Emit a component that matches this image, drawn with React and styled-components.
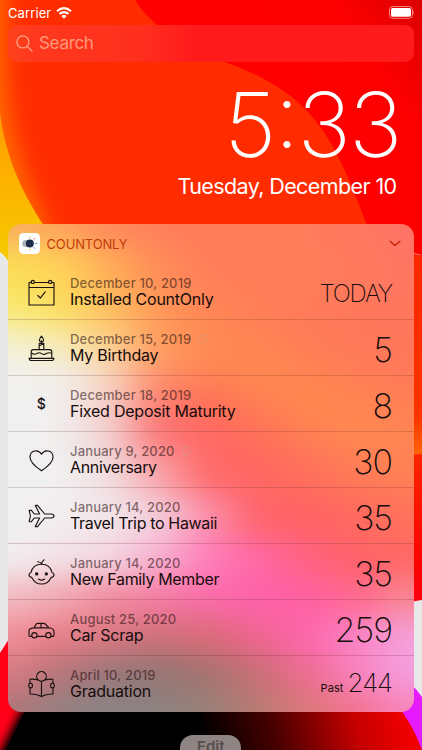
import React from 'react';
import styled, { createGlobalStyle } from 'styled-components';

const GlobalStyle = createGlobalStyle`
  html, body {
    margin: 0;
    padding: 0;
    height: 100%;
    overflow: hidden;
    background: #000;
  }

  * {
    box-sizing: border-box;
  }
`;

const Screen = styled.div`
  position: relative;
  width: 422px;
  height: 750px;
  overflow: hidden;
  font-family: Inter, 'Liberation Sans', sans-serif;
  color: #fff;
`;

const WallpaperSvg = styled.svg`
  position: absolute;
  inset: 0;
  display: block;
`;

const Content = styled.div`
  position: relative;
  display: flex;
  flex-direction: column;
  height: 750px;
  padding: 0 8.5px 0 8px;
`;

const StatusBar = styled.div`
  display: flex;
  align-items: center;
  height: 25px;
  flex-shrink: 0;
  font-size: 13px;
  letter-spacing: 0.1px;
`;

const Carrier = styled.span`
  flex: 1;
  display: flex;
  align-items: center;
  gap: 5px;
`;

const SearchBar = styled.div`
  display: flex;
  align-items: center;
  gap: 6px;
  height: 36.5px;
  flex-shrink: 0;
  padding-left: 8px;
  border-radius: 9px;
  background: linear-gradient(90deg, #fd431b 0, #ff381d 6%, #ff301e 32%, #ff1a1c 46%, #ff1a1c 100%);
  color: #ff9a7c;
  font-size: 17px;
  letter-spacing: -0.3px;
`;

const Clock = styled.div`
  display: flex;
  flex-direction: column;
  align-items: flex-end;
  height: 162px;
  flex-shrink: 0;
  padding-top: 18px;
`;

const Time = styled.div`
  font-size: 90px;
  font-weight: 220;
  line-height: 90px;
  letter-spacing: -1.9px;
  margin-right: 13px;
`;

const Colon = styled.span`
  vertical-align: 9px;
  line-height: 0;
`;

const Today = styled.div`
  margin: 2px 17px 0 0;
  font-size: 21.5px;
  line-height: 28px;
  letter-spacing: -0.6px;
`;

const Card = styled.section`
  position: relative;
  height: 488px;
  flex-shrink: 0;
  border-radius: 13px;
  overflow: hidden;
  color: #170d0c;
`;

const CardTint = styled.svg`
  position: absolute;
  inset: 0;
`;

const CardBody = styled.div`
  position: relative;
`;

const CardHeader = styled.header`
  display: flex;
  align-items: center;
  height: 40px;
  padding: 0 13px 0 10.5px;
`;

const CardName = styled.span`
  flex: 1;
  margin-left: 7px;
  color: #c23c0a;
  font-size: 13px;
  letter-spacing: -0.15px;
`;

const Row = styled.div`
  display: flex;
  align-items: center;
  height: 56px;
  padding: 0 21.5px 0 20px;
  border-bottom: 1px solid ${(props) => (props.$last ? 'transparent' : 'rgba(90, 30, 30, 0.2)')};
`;

const RowIcon = styled.svg`
  width: 27px;
  height: 27px;
  margin-top: 2px;
  flex-shrink: 0;
  fill: none;
  stroke: #1c1412;
  stroke-width: 1.15;
  stroke-linecap: round;
  stroke-linejoin: round;
`;

const RowText = styled.div`
  flex: 1;
  margin-left: 15px;
  padding-top: 1px;
`;

const DateLine = styled.div`
  display: flex;
  align-items: center;
  gap: 6px;
  height: 16px;
  font-size: 13px;
  font-weight: 500;
  line-height: 16px;
  letter-spacing: 0.18px;
  color: rgba(40, 15, 15, 0.58);
`;

const Title = styled.div`
  font-size: 16px;
  line-height: 17px;
  letter-spacing: ${(props) => props.$spacing}px;
  white-space: nowrap;
`;

const Count = styled.div`
  display: flex;
  align-items: baseline;
  gap: 4px;
  padding-top: 5px;
  font-weight: 160;
  font-size: ${(props) => props.$size}px;
  letter-spacing: ${(props) => props.$spacing}px;
  line-height: 40px;
`;

const Past = styled.span`
  font-size: 11px;
  font-weight: 400;
  letter-spacing: 0.1px;
`;

const Footer = styled.div`
  display: flex;
  justify-content: center;
  padding-top: 23.5px;
`;

const EditButton = styled.button`
  width: 61px;
  height: 30px;
  flex-shrink: 0;
  border: none;
  border-radius: 13px;
  padding: 0;
  background: #8d8483;
  color: #574d4c;
  font-family: inherit;
  font-size: 15px;
  font-weight: 600;
  line-height: 23px;
  display: flex;
  justify-content: center;
`;

const Wallpaper = () => (
  <WallpaperSvg width="422" height="750" viewBox="0 0 422 750">
    <defs>
      <linearGradient id="red" x1="0.5" y1="0.3" x2="1" y2="0">
        <stop offset="0" stopColor="#ff0000" />
        <stop offset="0.55" stopColor="#fc0000" />
        <stop offset="1" stopColor="#dc0000" />
      </linearGradient>
      <linearGradient id="yellow" x1="0" y1="0" x2="0" y2="1">
        <stop offset="0" stopColor="#ff9c00" />
        <stop offset="0.5" stopColor="#fcb400" />
        <stop offset="1" stopColor="#f5cc00" />
      </linearGradient>
      <linearGradient id="edge" x1="0" y1="0" x2="0" y2="1">
        <stop offset="0" stopColor="#ff2600" />
        <stop offset="0.8" stopColor="#ff3400" />
        <stop offset="1" stopColor="#ff6a00" />
      </linearGradient>
      <linearGradient id="lowerEdge" x1="0" y1="0" x2="0" y2="1">
        <stop offset="0" stopColor="#ff2400" />
        <stop offset="0.7" stopColor="#ff0400" />
        <stop offset="1" stopColor="#ff0010" />
      </linearGradient>
      <linearGradient id="floor" gradientUnits="userSpaceOnUse" x1="205" y1="750" x2="400" y2="700">
        <stop offset="0" stopColor="#000" />
        <stop offset="0.35" stopColor="#460000" />
        <stop offset="0.75" stopColor="#c40000" />
        <stop offset="1" stopColor="#f00000" />
      </linearGradient>
      <filter id="soft" x="-50%" y="-50%" width="200%" height="200%" colorInterpolationFilters="sRGB">
        <feGaussianBlur stdDeviation="4" />
      </filter>
      <filter id="glow" filterUnits="userSpaceOnUse" x="-60" y="-60" width="220" height="400" colorInterpolationFilters="sRGB">
        <feGaussianBlur stdDeviation="13" />
      </filter>
    </defs>
    <rect width="422" height="750" fill="#e8e8e8" />
    <rect width="422" height="240" fill="#ff2c00" />
    <path d="M-9 -40V60Q-9 150 38 240" fill="none" stroke="#ff8c00" strokeWidth="20" filter="url(#glow)" />
    <path d="M0 113C5 152 18 186 44 226V264H10Q5 255 0 252Z" fill="url(#yellow)" />
    <path d="M135 0H422V255Q392 250 366 223C350 180 334 140 308 112C284 86 250 71 222 61L157 25Q142 12 135 0Z" fill="url(#red)" />
    <path d="M400 249Q412 254 422 255V455L400 458Z" fill="url(#edge)" />
    <path d="M400 456L422 454V600Q416 600 400 606Z" fill="url(#lowerEdge)" />
    <path d="M0 653Q4 647 12 634L60 700V750H0Z" fill="#ff0018" />
    <path d="M392 670Q412 682 422 697V750H392Z" fill="#e61aff" />
    <path d="M30 700H393Q412 722 422 750H6Z" fill="url(#floor)" />
    <path d="M-12 775L22 708H90V770Z" fill="#000" filter="url(#soft)" />
  </WallpaperSvg>
);

// colour samples of the blurred wallpaper behind the card: [y, ...columns]
const tintRows = [
  [0, '#f9b25c', '#ffa45c', '#ff8a5c', '#ff7e5a', '#ff7c59', '#ff7c59', '#ff7c5b', '#ff785f', '#ff7268'],
  [45, '#fbdd55', '#ffd458', '#ffaf58', '#ff8c59', '#ff7e59', '#ff7d59', '#ff7c5a', '#ff7a5d', '#ff7663'],
  [85, '#f9e970', '#fce060', '#ffc05e', '#ff9858', '#ff8455', '#ff7e57', '#ff7b59', '#ff785b', '#ff775d'],
  [118, '#f4f0d0', '#f7ecb0', '#fcd088', '#ff9f60', '#ff8b52', '#ff8453', '#ff7c57', '#ff785a', '#ff775b'],
  [148, '#f1f0ee', '#f2efe8', '#f6d8bc', '#ff9468', '#ff8454', '#ff8851', '#ff8352', '#ff7d56', '#ff7959'],
  [178, '#f0f0f0', '#f1efef', '#f5cfc9', '#fc7c72', '#ff7058', '#ff8053', '#ff8850', '#ff8551', '#ff7e55'],
  [208, '#f0f0f0', '#f1efef', '#f3d0d1', '#fb7778', '#ff6662', '#ff7059', '#ff8053', '#ff8851', '#ff8553'],
  [248, '#f0f0f0', '#f1f0f0', '#f1dee0', '#f8a2a8', '#ff6a6a', '#ff6661', '#ff705c', '#ff7c56', '#ff8155'],
  [293, '#f0f0f0', '#f2eef0', '#f2e6ea', '#f4cedb', '#fb8eac', '#ff646a', '#ff6263', '#ff6a5f', '#ff725c'],
  [335, '#f1edef', '#f3e2e7', '#f4d6e1', '#f8b0d0', '#ff7dbb', '#ff68a4', '#ff6280', '#ff6268', '#ff6864'],
  [373, '#f2bcc3', '#f1a9b3', '#f18ca0', '#f57ca3', '#fa6caa', '#ff62ac', '#ff60a2', '#ff6a90', '#f88892'],
  [413, '#f08e99', '#ea7e88', '#dc7881', '#cf7079', '#dd6b78', '#f06490', '#ff67af', '#fa84c6', '#f4a2dc'],
  [447, '#d87c84', '#b87579', '#9a787b', '#947674', '#a4736f', '#ca6f75', '#ef6b92', '#f983c0', '#f49fe0'],
  [488, '#b07478', '#948082', '#8a8384', '#8c8381', '#988078', '#b87c74', '#dc7878', '#f47290', '#f886bc'],
];

const Tint = () => (
  <CardTint width="405.5" height="488" viewBox="0 0 405.5 488">
    <defs>
      <filter
        id="mesh"
        filterUnits="userSpaceOnUse"
        x="-80"
        y="-80"
        width="570"
        height="650"
        colorInterpolationFilters="sRGB"
      >
        <feGaussianBlur stdDeviation="20 14" />
      </filter>
    </defs>
    <g filter="url(#mesh)">
      {tintRows.map(([y, ...colors], i) => {
        const prev = i === 0 ? -160 : tintRows[i - 1][0];
        const next = i === tintRows.length - 1 ? 650 : tintRows[i + 1][0];
        const top = (prev + y) / 2;
        const bottom = (y + next) / 2;
        return colors.map((color, col) => {
          const left = col === 0 ? -80 : col * 50 - 25;
          const right = col === 8 ? 490 : col * 50 + 25;
          return (
            <rect
              key={`${i}-${col}`}
              x={left}
              y={top}
              width={right - left + 0.5}
              height={bottom - top + 0.5}
              fill={color}
            />
          );
        });
      })}
    </g>
  </CardTint>
);

const icons = {
  calendar: (
    <>
      <path d="M3 3.5H1V26H26V3.5H24M6.5 3.5H20.5M1 8.5H26" />
      <circle cx="4.8" cy="2.9" r="1.6" />
      <circle cx="22.2" cy="2.9" r="1.6" />
      <path d="M9.8 16.5L12.3 19.2L17.2 12.8" />
    </>
  ),
  cake: (
    <>
      <path d="M1 23.4H26L24.8 25.5H2.2ZM3.2 23V16.8Q3.2 14.6 5.4 14.6H21.6Q23.8 14.6 23.8 16.8V23" />
      <path d="M3.4 18Q6.5 20.3 9 18.4Q11.3 17 13.5 18.6Q16 20.4 18.3 18.5Q21 17.2 23.6 18.3" />
      <path d="M11.2 14.4V8.3H15.8V14.4M11.3 10.8L15.6 8.7M13.5 8V5.5" />
      <path d="M13.5 1.2Q9.3 6.4 13.5 7.1Q17.7 6.4 13.5 1.2Z" />
    </>
  ),
  dollar: (
    <text x="13.3" y="18.2" textAnchor="middle" fontSize="14" fontWeight="500" fill="#1c1412" stroke="none">$</text>
  ),
  heart: (
    <path d="M13.5 23.8C8.5 20.4 2 15.8 2 10.2C2 3.2 10.2 1.8 13.5 7.3C16.8 1.8 25 3.2 25 10.2C25 15.8 18.5 20.4 13.5 23.8Z" />
  ),
  plane: (
    <path d="M1.2 7.3H3.4L6.3 11L11.6 11L7.3 2.4H9.5L16.7 11H23Q26 11.3 26 13Q26 14.7 23 15H16.7L9.5 23.6H7.3L11.6 15L6.3 15L3.4 18.7H1.2L2.4 13Z" />
  ),
  baby: (
    <>
      <path d="M3 13.5C4.2 7.8 8.3 5.2 13.5 5.2C18.7 5.2 22.8 7.8 24 13.5Q26.2 14.2 26 16.2Q25.7 18.2 23.2 18.4C21.2 22.6 17.8 25 13.5 25C9.2 25 5.8 22.6 3.8 18.4Q1.3 18.2 1 16.2Q.8 14.2 3 13.5Z" />
      <path d="M13.7 5Q12.7 2.8 9.7 2.7M13.7 5Q13.8 2 16.2.7M10.4 20Q13.5 22.4 16.6 20" />
      <circle cx="8.7" cy="14.9" r="1.1" fill="#1c1412" />
      <circle cx="18.3" cy="14.9" r="1.1" fill="#1c1412" />
    </>
  ),
  car: (
    <>
      <path d="M3.6 21.4H1.8Q1 21.4 1 20V15.2Q1.2 14 3.3 13.4L6 12.8L8.4 8.9Q8.8 8.3 9.6 8.3H15.5Q16.6 8.3 17.3 9L21 12.8Q24.4 13.3 25.3 14.6Q26 15.5 26 17.2V20Q26 21.4 25 21.4H23.2M9.2 21.4H17.6M6 12.8H21M13 8.4V12.7" />
      <circle cx="6.4" cy="20.2" r="2.6" />
      <circle cx="20.4" cy="20.2" r="2.6" />
    </>
  ),
  reader: (
    <>
      <path d="M9.9 8.6A4.8 4.8 0 1 1 17.1 8.6" />
      <path d="M2 12.2V8.2Q8.7 7.7 13.5 10.4Q18.3 7.7 25 8.2V12.2M2 17V23Q8.7 22.6 13.5 25.6Q18.3 22.6 25 23V17M13.5 10.4V25.4" />
      <rect x=".8" y="12.4" width="3.6" height="4.4" rx="1.6" />
      <rect x="22.6" y="12.4" width="3.6" height="4.4" rx="1.6" />
    </>
  ),
};

const events = [
  { icon: 'calendar', date: 'December 10, 2019', title: 'Installed CountOnly', count: 'TODAY', size: 24, spacing: -1.3 },
  { icon: 'cake', date: 'December 15, 2019', title: 'My Birthday', count: '5', repeat: true },
  { icon: 'dollar', date: 'December 18, 2019', title: 'Fixed Deposit Maturity', count: '8' },
  { icon: 'heart', date: 'January 9, 2020', title: 'Anniversary', count: '30', repeat: true, titleSpacing: -0.35 },
  { icon: 'plane', date: 'January 14, 2020', title: 'Travel Trip to Hawaii', count: '35', titleSpacing: -0.35 },
  { icon: 'baby', date: 'January 14, 2020', title: 'New Family Member', count: '35', titleSpacing: -0.35 },
  { icon: 'car', date: 'August 25, 2020', title: 'Car Scrap', count: '259' },
  { icon: 'reader', date: 'April 10, 2019', title: 'Graduation', count: '244', past: true, size: 26, spacing: -1 },
];

const WifiIcon = () => (
  <svg width="16" height="12" viewBox="0 0 16 12" fill="none" stroke="#fff" strokeWidth="2">
    <path d="M.9 4.3Q8-2 15.1 4.3" />
    <path d="M3.4 7.1Q8 3.1 12.6 7.1" />
    <path d="M8 11.8L5.3 9Q8 6.9 10.7 9Z" fill="#fff" stroke="none" />
  </svg>
);

const BatteryIcon = () => (
  <svg width="27" height="13" viewBox="0 0 27 13">
    <rect x="2.5" y=".5" width="23" height="11.8" rx="3.4" fill="none" stroke="#fff" strokeOpacity=".5" />
    <rect x="4" y="2" width="20" height="8.8" rx="1.8" fill="#fff" />
    <path d="M26.2 4.6Q27 5 27 6.4Q27 7.8 26.2 8.2Z" fill="#fff" fillOpacity=".5" />
  </svg>
);

const AppIcon = () => (
  <svg width="21" height="21" viewBox="0 0 21 21">
    <rect width="21" height="21" rx="4.6" fill="#fdfefe" />
    <circle cx="6.8" cy="10.5" r="3.6" fill="#a9b4bd" />
    <circle cx="10.8" cy="10.5" r="4" fill="#1d2f49" />
    <g strokeWidth=".9" strokeLinecap="round">
      <path d="M10.8 3.6V5.2" stroke="#f0b36a" />
      <path d="M14.8 6.4L15.8 5.4" stroke="#e8605c" />
      <path d="M16.2 10.5H18" stroke="#45b5c4" />
      <path d="M14.8 14.5L15.8 15.5" stroke="#5f86c9" />
      <path d="M10.8 15.8V17.4" stroke="#f0b36a" />
    </g>
  </svg>
);

const RepeatIcon = () => (
  <svg width="10" height="10" viewBox="0 0 10 10" fill="none" stroke="#c9a193" strokeOpacity=".55" strokeWidth="1">
    <path d="M1 5.6V3.6Q1 1.8 3 1.8H8M6.4.4L8 1.8L6.4 3.2M9 4.4V6.4Q9 8.2 7 8.2H2M3.6 9.6L2 8.2L3.6 6.8" />
  </svg>
);

const EventRow = ({ event, last }) => (
  <Row $last={last}>
    <RowIcon viewBox="0 0 27 27">{icons[event.icon]}</RowIcon>
    <RowText>
      <DateLine>
        {event.date}
        {event.repeat && <RepeatIcon />}
      </DateLine>
      <Title $spacing={event.titleSpacing || -0.23}>{event.title}</Title>
    </RowText>
    <Count $size={event.size || 34} $spacing={event.spacing || -1}>
      {event.past && <Past>Past</Past>}
      {event.count}
    </Count>
  </Row>
);

const App = () => (
  <>
    <GlobalStyle />
    <Screen>
      <Wallpaper />
      <Content>
        <StatusBar>
          <Carrier>
            Carrier
            <WifiIcon />
          </Carrier>
          <BatteryIcon />
        </StatusBar>
        <SearchBar>
          <svg width="17" height="17" viewBox="0 0 17 17" fill="none" stroke="#ff9a7c" strokeWidth="1.4" strokeLinecap="round">
            <circle cx="6.9" cy="6.9" r="6" />
            <path d="M11.4 11.4L16 16" />
          </svg>
          Search
        </SearchBar>
        <Clock>
          <Time>
            5<Colon>:</Colon>33
          </Time>
          <Today>Tuesday, December 10</Today>
        </Clock>
        <Card>
          <Tint />
          <CardBody>
            <CardHeader>
              <AppIcon />
              <CardName>COUNTONLY</CardName>
              <svg width="12" height="7" viewBox="0 0 12 7" fill="none" stroke="#c8260c" strokeWidth="1.5" strokeLinecap="round">
                <path d="M1.2 1.2L6 5.6L10.8 1.2" />
              </svg>
            </CardHeader>
            {events.map((event, i) => (
              <EventRow key={event.title} event={event} last={i === events.length - 1} />
            ))}
          </CardBody>
        </Card>
        <Footer>
          <EditButton>Edit</EditButton>
        </Footer>
      </Content>
    </Screen>
  </>
);

export default App;
